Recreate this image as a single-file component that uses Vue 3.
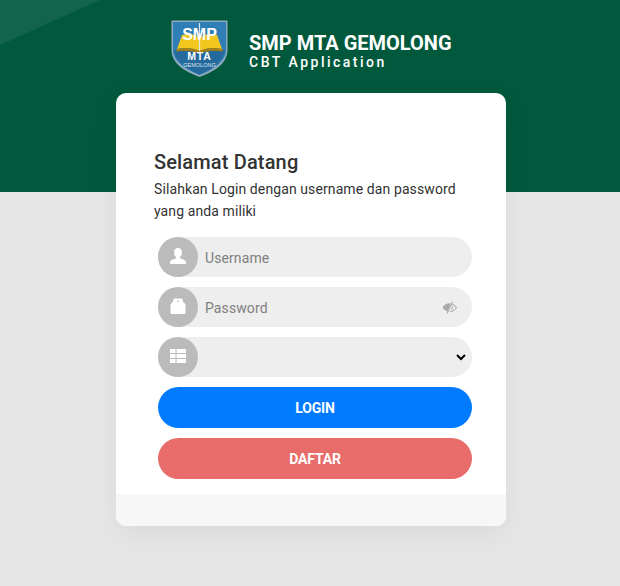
<template>
  <div class="page">
    <header class="banner">
      <div class="banner-glare"></div>
      <div class="brand">
        <svg class="logo" viewBox="0 0 57 57" width="57" height="57">
          <path d="M0.500 0.500 H56.500 V30 C56.500 44 42 52 28.500 57 C15 52 0.500 44 0.500 30 Z" fill="#8fa9bd" />
          <path d="M2 2 H55 V30 C55 42 41 50 28.500 55 C16 50 2 42 2 30 Z" fill="#2f7fb6" />
          <path d="M3 30 H54 C53 41 41 49.500 28.500 54.500 C16 49.500 4 41 3 30 Z" fill="#25699d" />
          <path d="M11 15 C17 13 24 14 28.500 18 C33 14 40 13 46 15 L51 29 C43 27 35 28 28.500 31 C22 28 14 27 6 29 Z" fill="#f2c81f" />
          <path d="M6 29 C14 27 22 28 28.500 31 C35 28 43 27 51 29 L52 31.500 C43 30 35 31 28.500 33.500 C22 31 14 30 5 31.500 Z" fill="#a9810f" />
          <path d="M28.500 3 V31" stroke="#dfe6ea" stroke-width="1.200" />
          <text x="28.500" y="20" class="logo-smp" text-anchor="middle">SMP</text>
          <text x="28.500" y="40" class="logo-mta" text-anchor="middle">MTA</text>
          <text x="28.500" y="47" class="logo-place" text-anchor="middle">GEMOLONG</text>
        </svg>
        <div class="brand-text">
          <div class="brand-name">SMP MTA GEMOLONG</div>
          <div class="brand-sub">CBT Application</div>
        </div>
      </div>
    </header>

    <main class="card">
      <div class="card-body">
        <h1 class="title">Selamat Datang</h1>
        <p class="intro">Silahkan Login dengan username dan password yang anda miliki</p>

        <form class="form" @submit.prevent>
          <div class="field">
            <span class="field-icon">
              <svg viewBox="0 0 20 20" width="20" height="20">
                <path d="M10 1 C7.300 1 6 3 6 5.500 C6 7.500 6.800 9.200 8 10 V11.300 C6 12.300 2 13 2 15.500 V17 H18 V15.500 C18 13 14 12.300 12 11.300 V10 C13.200 9.200 14 7.500 14 5.500 C14 3 12.700 1 10 1 Z" fill="#fff" />
              </svg>
            </span>
            <input v-model="username" class="field-input" type="text" placeholder="Username" />
          </div>

          <div class="field">
            <span class="field-icon">
              <svg viewBox="0 0 20 20" width="20" height="20">
                <path fill-rule="evenodd" d="M7 1.500 H13 C14 1.500 14.500 2.200 14.700 3 L15.200 5.200 C16.600 5.600 17.500 6.800 17.500 8.500 V15.500 C17.500 16.500 17 17 16 17 H4 C3 17 2.500 16.500 2.500 15.500 V8.500 C2.500 6.800 3.400 5.600 4.800 5.200 L5.300 3 C5.500 2.200 6 1.500 7 1.500 Z M9 3.800 V4.800 H11 V3.800 Z" fill="#fff" />
              </svg>
            </span>
            <input v-model="password" class="field-input" type="password" placeholder="Password" />
            <svg class="eye" viewBox="0 0 16 14" width="15" height="13">
              <path d="M0.500 7 C2.500 4 5 2.500 8 2.500 C8.500 2.500 9 2.600 9.500 2.700 L6 11.300 C3.800 10.700 2 9.200 0.500 7 Z" fill="#aaa" />
              <path d="M10.800 3.200 C12.700 3.900 14.200 5.200 15.500 7 C13.800 9.600 11.500 11.300 8.500 11.500" fill="none" stroke="#aaa" stroke-width="1.100" />
              <path d="M11 5.500 C11.500 7 11 8.500 9.500 9.500" fill="none" stroke="#aaa" stroke-width="1" />
              <path d="M11.500 0.800 L5.500 13.200" stroke="#aaa" stroke-width="1.100" />
            </svg>
          </div>

          <div class="field">
            <span class="field-icon">
              <svg viewBox="0 0 20 20" width="20" height="20" fill="#fff">
                <rect x="2" y="2" width="5.500" height="4" />
                <rect x="8.500" y="2" width="9.500" height="4" />
                <rect x="2" y="7" width="5.500" height="4" />
                <rect x="8.500" y="7" width="9.500" height="4" />
                <rect x="2" y="12" width="5.500" height="4" />
                <rect x="8.500" y="12" width="9.500" height="4" />
              </svg>
            </span>
            <select v-model="server" class="field-select">
              <option value=""></option>
            </select>
          </div>

          <button class="btn btn-login" type="submit">LOGIN</button>
          <button class="btn btn-daftar" type="button">DAFTAR</button>
        </form>
      </div>
      <div class="card-foot"></div>
    </main>
  </div>
</template>

<script setup>
import { ref } from 'vue'

const username = ref('')
const password = ref('')
const server = ref('')
</script>

<style>
html,
body {
  margin: 0;
  background: #e6e6e6;
}
</style>

<style scoped>
.page {
  min-height: 586px;
  background: #e6e6e6;
  font-family: Roboto, "Liberation Sans", sans-serif;
  overflow: hidden;
}

.banner {
  position: relative;
  height: 192px;
  box-sizing: border-box;
  padding-top: 20px;
  background: #00593d;
  overflow: hidden;
}

/* 左上角的浅色斜块 */
.banner-glare {
  position: absolute;
  top: 0;
  left: 0;
  width: 100px;
  height: 45px;
  background: rgba(255, 255, 255, 0.07);
  clip-path: polygon(0 0, 100% 0, 0 100%);
}

.brand {
  display: flex;
  margin-left: 171px;
}

.logo {
  display: block;
  flex-shrink: 0;
}

.logo-smp {
  font: 700 16px "Liberation Sans", sans-serif;
  fill: #fff;
}

.logo-mta {
  font: 700 10.500px "Liberation Sans", sans-serif;
  fill: #fff;
  letter-spacing: 0.8px;
}

.logo-place {
  font: 400 5.500px "Liberation Sans", sans-serif;
  fill: #dbe6ee;
}

.brand-text {
  margin-left: 21px;
  padding-top: 12px;
  color: #fff;
}

.brand-name {
  font-size: 20px;
  font-weight: 700;
  line-height: 22px;
}

.brand-sub {
  font-size: 14px;
  font-weight: 500;
  line-height: 16px;
  letter-spacing: 2.5px;
}

.card {
  position: relative;
  width: 390px;
  margin: -99px 0 0 116px;
  background: #fff;
  border-radius: 10px;
  box-shadow: 0 10px 30px rgba(0, 0, 0, 0.05);
  overflow: hidden;
}

.card-body {
  height: 401px;
  box-sizing: border-box;
  padding: 56px 34px 0 38px;
}

.card-foot {
  height: 32px;
  background: #f7f7f8;
}

.title {
  margin: 0;
  font-size: 20px;
  font-weight: 500;
  line-height: 26px;
  letter-spacing: 0.15px;
  color: #333;
}

.intro {
  margin: 3px 0 15px;
  font-size: 14px;
  line-height: 22px;
  letter-spacing: 0.1px;
  color: #333;
}

.form {
  display: flex;
  flex-direction: column;
  gap: 10px;
  margin-left: 4px;
}

.field {
  display: flex;
  align-items: center;
  height: 40px;
  border-radius: 20px;
  background: #eee;
}

.field-icon {
  display: flex;
  align-items: center;
  justify-content: center;
  flex-shrink: 0;
  width: 40px;
  height: 40px;
  border-radius: 50%;
  background: #bbb;
}

.field-input {
  flex: 1;
  min-width: 0;
  height: 100%;
  box-sizing: border-box;
  padding: 2px 0 0 7px;
  border: none;
  outline: none;
  background: transparent;
  font-family: inherit;
  font-size: 14px;
  letter-spacing: 0.1px;
  color: #333;
}

.field-input::placeholder {
  color: #808080;
  opacity: 1;
}

.eye {
  flex-shrink: 0;
  margin-right: 15px;
}

.field-select {
  flex: 1;
  min-width: 0;
  height: 100%;
  margin-right: 3px;
  border: none;
  outline: none;
  background: transparent;
  font-family: inherit;
  font-size: 14px;
}

.btn {
  height: 41px;
  border: none;
  border-radius: 21px;
  color: #fff;
  font-family: inherit;
  font-size: 14px;
  font-weight: 700;
  letter-spacing: -0.2px;
}

.btn-login {
  background: #007bff;
}

.btn-daftar {
  background: #e76c6a;
}
</style>
